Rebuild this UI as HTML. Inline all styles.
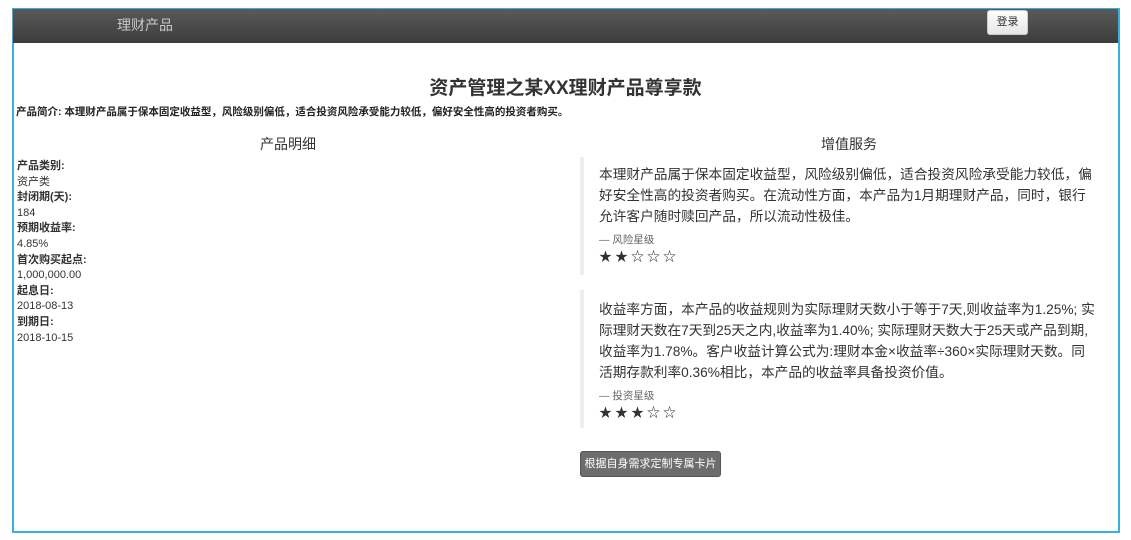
<!DOCTYPE html>
<html><head><meta charset="utf-8"><style>
*{margin:0;padding:0;box-sizing:border-box}
body{width:1131px;height:540px;background:#fff;font-family:"Liberation Sans","Noto Sans CJK SC",sans-serif;color:#333;position:relative;overflow:hidden}
.frame{position:absolute;left:12px;top:8px;width:1108px;height:525px;border:2px solid #3ab0e2;border-top-width:1px}
.nav{position:absolute;left:13px;top:9px;width:1105px;height:34px;background:linear-gradient(#5a5a5a,#3c3c3c)}
.brand{position:absolute;left:117px;top:15px;color:#c8c8c8;font-size:14px}
.login{position:absolute;left:987px;top:10px;width:41px;height:25px;background:linear-gradient(#fff,#e6e6e6);border:1px solid #ccc;border-radius:3px;font-size:11px;text-align:center;line-height:23px;color:#333}
.abs{position:absolute;white-space:nowrap}
h1{position:absolute;left:0;width:1131px;top:73px;text-align:center;font-size:19px;font-weight:bold;color:#333}
.intro{left:16px;top:104px;font-size:10.5px;font-weight:bold;color:#222}
.h2{font-size:14px;top:134px}
.list{position:absolute;left:17px;top:159px;font-size:11px;line-height:15.6px}
.list b{display:block}
.bq{position:absolute;left:580px;border-left:4px solid #eee;padding-left:15px;width:520px}
.bq p{font-size:13.7px;line-height:21px;color:#333;width:497px}
.bq small{display:block;font-size:10.5px;color:#666;margin-top:6px;line-height:15px}
.stars{font-size:13px;line-height:18px;color:#333;letter-spacing:3px}
.btn{position:absolute;left:580px;top:451px;width:141px;height:26px;background:#6d6d6d;border:1px solid #555;border-radius:3px;color:#fff;font-size:11px;text-align:center;line-height:24px}
</style></head><body>
<div class="frame"></div>
<div class="nav"></div>
<div class="brand">理财产品</div>
<div class="login">登录</div>
<h1>资产管理之某XX理财产品尊享款</h1>
<div class="abs intro">产品简介: 本理财产品属于保本固定收益型，风险级别偏低，适合投资风险承受能力较低，偏好安全性高的投资者购买。</div>
<div class="abs h2" style="left:260px">产品明细</div>
<div class="abs h2" style="left:821px">增值服务</div>
<div class="list">
<b>产品类别:</b>资产类<b>封闭期(天):</b>184<b>预期收益率:</b>4.85%<b>首次购买起点:</b>1,000,000.00<b>起息日:</b>2018-08-13<b>到期日:</b>2018-10-15
</div>
<div class="bq" style="top:157px;height:118px;padding-top:7px">
<p>本理财产品属于保本固定收益型，风险级别偏低，适合投资风险承受能力较低，偏好安全性高的投资者购买。在流动性方面，本产品为1月期理财产品，同时，银行允许客户随时赎回产品，所以流动性极佳。</p>
<small>— 风险星级</small>
<div class="stars">★★☆☆☆</div>
</div>
<div class="bq" style="top:290px;height:138px;padding-top:9px">
<p>收益率方面，本产品的收益规则为实际理财天数小于等于7天,则收益率为1.25%; 实际理财天数在7天到25天之内,收益率为1.40%; 实际理财天数大于25天或产品到期,收益率为1.78%。客户收益计算公式为:理财本金×收益率÷360×实际理财天数。同活期存款利率0.36%相比，本产品的收益率具备投资价值。</p>
<small>— 投资星级</small>
<div class="stars">★★★☆☆</div>
</div>
<div class="btn">根据自身需求定制专属卡片</div>
</body></html>
